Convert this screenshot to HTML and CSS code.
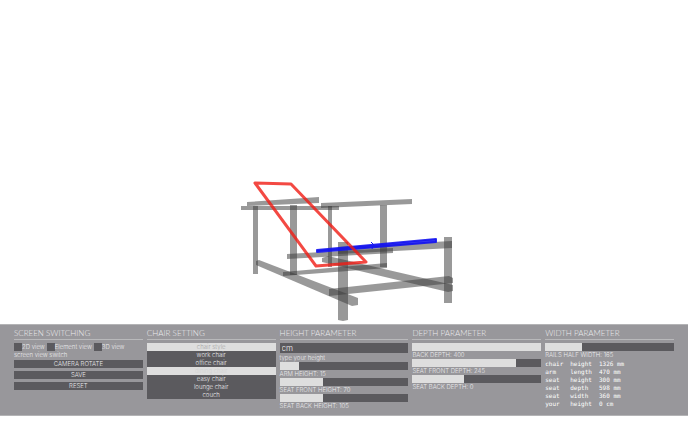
FILE: index.html
```html
<!DOCTYPE html>
<html lang="en">
<head>
<meta charset="utf-8">
<title>Chair designer</title>
<link rel="stylesheet" href="styles.css">
</head>
<body>
<main class="stage">
<svg class="chair" viewBox="0 0 688 324" role="img" aria-label="3D view of the chair">
  <g class="beams">
    <path d="M247 202L319 197V203L247 206Z"/>
    <path d="M241 206H339V210H241Z"/>
    <path d="M321 203L412 199V204L321 208Z"/>
    <path d="M253 206H258V274H253Z"/>
    <path d="M290 205H297V275H290Z"/>
    <path d="M328 206H332V267H328Z"/>
    <path d="M380 205H387V267H380Z"/>
    <path d="M338 242H348V320L343 321L338 320Z"/>
    <path d="M444 237H452V303H444Z"/>
    <path d="M287 254L393 248V253L287 259Z"/>
    <path d="M338 247L452 241V248L338 254Z"/>
    <path d="M283 272L387 263V268L283 276Z"/>
    <path d="M256 261L259 260L358 298V305L352 306L256 265Z"/>
    <path d="M322 258L328 256L453 285V291L448 292L322 262Z"/>
    <path d="M329 289L449 276L453 278V283L329 296Z"/>
  </g>
  <path class="seat" d="M317 250L436 239V242L317 252Z"/>
  <path class="seat-line" d="M371 242L374 245M372 249L373 246"/>
  <path class="back" d="M255 183L291 184L366 262L316 266Z"/>
</svg>
</main>
<form class="panel">
  <section class="group">
    <h2 class="title">SCREEN SWITCHING</h2>
    <div class="checks">
      <label class="check"><input type="checkbox">2D view</label>
      <label class="check"><input type="checkbox">Element view</label>
      <label class="check"><input type="checkbox">3D view</label>
    </div>
    <p class="caption">screen view switch</p>
    <div class="actions">
      <button type="button" class="button">CAMERA ROTATE</button>
      <button type="button" class="button">SAVE</button>
      <button type="button" class="button">RESET</button>
    </div>
  </section>
  <section class="group">
    <h2 class="title">CHAIR SETTING</h2>
    <div class="list">
      <button type="button" class="item heading">chair style</button>
      <button type="button" class="item">work chair</button>
      <button type="button" class="item">office chair</button>
      <button type="button" class="item selected">dining chair</button>
      <button type="button" class="item">easy chair</button>
      <button type="button" class="item">lounge chair</button>
      <button type="button" class="item">couch</button>
    </div>
  </section>
  <section class="group">
    <h2 class="title">HEIGHT PARAMETER</h2>
    <input class="field" id="height" type="text" value="cm">
    <label class="caption" for="height">type your height</label>
    <input class="slider" id="arm" type="range" min="0" max="1000" value="145" style="--fill:14.5%">
    <label class="caption" for="arm">ARM HEIGHT: 15</label>
    <input class="slider" id="front" type="range" min="0" max="1000" value="335" style="--fill:33.5%">
    <label class="caption" for="front">SEAT FRONT HEIGHT: 70</label>
    <input class="slider" id="rear" type="range" min="0" max="1000" value="335" style="--fill:33.5%">
    <label class="caption" for="rear">SEAT BACK HEIGHT: 105</label>
  </section>
  <section class="group">
    <h2 class="title">DEPTH PARAMETER</h2>
    <input class="slider" id="back-depth" type="range" min="0" max="1000" value="1000" style="--fill:100%">
    <label class="caption" for="back-depth">BACK DEPTH: 400</label>
    <input class="slider" id="front-depth" type="range" min="0" max="1000" value="810" style="--fill:81%">
    <label class="caption" for="front-depth">SEAT FRONT DEPTH: 245</label>
    <input class="slider" id="rear-depth" type="range" min="0" max="1000" value="400" style="--fill:40%">
    <label class="caption" for="rear-depth">SEAT BACK DEPTH: 0</label>
  </section>
  <section class="group">
    <h2 class="title">WIDTH PARAMETER</h2>
    <input class="slider" id="rails" type="range" min="0" max="1000" value="290" style="--fill:29%">
    <label class="caption" for="rails">RAILS HALF WIDTH: 165</label>
    <table class="sizes">
      <tr><td>chair</td><td>height</td><td>1326 mm</td></tr>
      <tr><td>arm</td><td>length</td><td>470 mm</td></tr>
      <tr><td>seat</td><td>height</td><td>300 mm</td></tr>
      <tr><td>seat</td><td>depth</td><td>598 mm</td></tr>
      <tr><td>seat</td><td>width</td><td>360 mm</td></tr>
      <tr><td>your</td><td>height</td><td>0 cm</td></tr>
    </table>
  </section>
</form>
</body>
</html>
```

FILE: styles.css
```css
* { box-sizing: border-box; }
body {
  margin: 0;
  min-height: 100vh;
  display: flex;
  flex-direction: column;
  padding-bottom: 9px;
  background: #fff;
  font-family: Inter, "Liberation Sans", sans-serif;
  font-weight: 300;
  font-size: 6px;
  line-height: 8px;
  color: #ececee;
}
.stage { flex: 1; display: flex; min-height: 0; }
.chair { width: 100%; display: block; }
.beams { fill: #3c3c3c; fill-opacity: .52; }
.seat { fill: #1414f0; fill-opacity: .85; stroke: #1414f0; stroke-opacity: .9; stroke-width: 2; stroke-linejoin: round; }
.seat-line { stroke: #1414f0; fill: none; }
.back { fill: none; stroke: #f01c14; stroke-opacity: .8; stroke-width: 3; stroke-linejoin: round; }
.panel {
  display: grid;
  grid-template-columns: repeat(5, minmax(0, 1fr));
  gap: 4px;
  padding: 4px 14px 5px;
  background: #98979b;
  border-top: 1px solid #b4b4b6;
  border-bottom: 1px solid #b4b4b6;
}
.group { display: flex; flex-direction: column; }
.title {
  margin: 0 0 3px;
  font-family: Lato, "Liberation Sans", sans-serif;
  font-size: 8px;
  line-height: 9px;
  padding-bottom: 1px;
  font-weight: 300;
  border-bottom: 1px solid #b9b9bb;
}
.checks { display: flex; gap: 2px; }
.check { display: flex; white-space: nowrap; }
.check input { appearance: none; margin: 0; width: 8px; height: 8px; background: #5b5a5e; }
.caption { margin: 1px 0; line-height: 6px; white-space: nowrap; }
.actions { display: flex; flex-direction: column; gap: 3px; margin-top: 1px; }
.button, .item {
  border: 0;
  padding: 0;
  height: 8px;
  font: inherit;
  color: inherit;
  background: #5b5a5e;
  text-align: center;
}
.list { display: flex; flex-direction: column; }
.heading { background: #dedede; color: #a6a6a6; }
.selected { background: #dedede; color: #d2d2d2; }
.field {
  width: 100%;
  height: 10px;
  margin: 0 0 1px;
  padding: 0 2px;
  border: 0;
  background: #5b5a5e;
  color: inherit;
  font: inherit;
  font-size: 8px;
}
.slider {
  appearance: none;
  width: 100%;
  height: 8px;
  margin: 0;
  background: linear-gradient(to right, #dedede var(--fill), #5b5a5e var(--fill));
}
.slider::-webkit-slider-thumb { appearance: none; width: 0; height: 8px; }
.sizes {
  align-self: flex-start;
  margin-top: 1px;
  border-collapse: collapse;
  font-family: "DejaVu Sans Mono", monospace;
  font-weight: 400;
  font-size: 6px;
  line-height: 8px;
  color: #fff;
}
.sizes td { padding: 0 7px 0 0; white-space: nowrap; }
```
